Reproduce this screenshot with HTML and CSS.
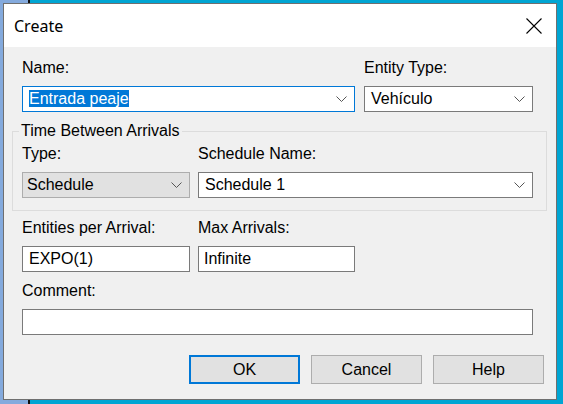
FILE: index.html
```html
<!DOCTYPE html>
<html lang="en">
<head>
<meta charset="utf-8">
<title>Create</title>
<link rel="stylesheet" href="styles.css">
</head>
<body>
<div class="window">
  <div class="titlebar">
    <span class="title">Create</span>
    <svg class="close" width="16" height="16" viewBox="0 0 16 16"><path d="M0.5 0.5 L15.5 15.5 M15.5 0.5 L0.5 15.5" stroke="#000" stroke-width="1.1" fill="none"/></svg>
  </div>
  <div class="content">
    <div class="row row-name">
      <div class="field">
        <div class="label">Name:</div>
        <div class="box combo focus w-name"><span class="val pad-7"><span class="sel">Entrada peaje</span></span><svg class="chev" width="11" height="6" viewBox="0 0 11 6"><polyline points="0.5,0.5 5.5,5.5 10.5,0.5" fill="none" stroke="#555" stroke-width="1"/></svg></div>
      </div>
      <div class="field">
        <div class="label">Entity Type:</div>
        <div class="box combo w-entity"><span class="val pad-6">Vehículo</span><svg class="chev" width="11" height="6" viewBox="0 0 11 6"><polyline points="0.5,0.5 5.5,5.5 10.5,0.5" fill="none" stroke="#555" stroke-width="1"/></svg></div>
      </div>
    </div>
    <fieldset class="group">
      <legend>Time Between Arrivals</legend>
      <div class="row">
        <div class="field">
          <div class="label">Type:</div>
          <div class="box combo disabled w-left"><span class="val pad-4">Schedule</span><svg class="chev" width="11" height="6" viewBox="0 0 11 6"><polyline points="0.5,0.5 5.5,5.5 10.5,0.5" fill="none" stroke="#555" stroke-width="1"/></svg></div>
        </div>
        <div class="field">
          <div class="label">Schedule Name:</div>
          <div class="box combo w-sched"><span class="val pad-6">Schedule 1</span><svg class="chev" width="11" height="6" viewBox="0 0 11 6"><polyline points="0.5,0.5 5.5,5.5 10.5,0.5" fill="none" stroke="#555" stroke-width="1"/></svg></div>
        </div>
      </div>
    </fieldset>
    <div class="row row-ent">
      <div class="field">
        <div class="label">Entities per Arrival:</div>
        <div class="box w-left"><span class="val pad-7">EXPO(1)</span></div>
      </div>
      <div class="field">
        <div class="label">Max Arrivals:</div>
        <div class="box w-max"><span class="val pad-5">Infinite</span></div>
      </div>
    </div>
    <div class="row row-comment">
      <div class="field">
        <div class="label">Comment:</div>
        <div class="box w-comment"></div>
      </div>
    </div>
    <div class="buttons">
      <div class="btn default">OK</div>
      <div class="btn">Cancel</div>
      <div class="btn">Help</div>
    </div>
  </div>
</div>
</body>
</html>
```
FILE: styles.css
```css
* { box-sizing: border-box; }
html, body { margin: 0; padding: 0; }
body {
  width: 563px;
  height: 404px;
  overflow: hidden;
  padding: 3px 6px 4px 3px;
  background: linear-gradient(90deg, #84aadd 0 28px, #101010 28px 30px, #00a5d3 30px);
  font-family: "Liberation Sans", Arial, sans-serif;
  font-size: 16px;
  color: #000;
}
.window {
  width: 554px;
  height: 397px;
  border: 1px solid #6f6f6f;
  background: #f0f0f0;
  display: flex;
  flex-direction: column;
}
.titlebar {
  height: 43px;
  background: #fff;
  display: flex;
  align-items: center;
  justify-content: space-between;
  padding: 0 14px 0 10px;
}
.title {
  font-family: "Noto Sans", "Open Sans", sans-serif;
  font-size: 16px;
  line-height: 20px;
  margin-top: 1px;
}
.close { display: block; margin-top: 1px; }
.content {
  flex: 1;
  padding: 12px 8px 0 8px;
  display: flex;
  flex-direction: column;
}
.row { display: flex; gap: 8px; }
.row-name, .row-ent, .row-comment { margin-left: 10px; }
.row-name { gap: 9px; }
.row-ent { margin-top: 8px; }
.row-comment { margin-top: 10px; }
.field { display: flex; flex-direction: column; gap: 9px; }
.label { line-height: 18px; height: 18px; white-space: nowrap; }
.box {
  height: 26px;
  border: 1px solid #7a7a7a;
  background: #fff;
  display: flex;
  align-items: center;
  justify-content: space-between;
  line-height: 18px;
  white-space: nowrap;
}
.combo { padding-right: 7px; }
.focus { border-color: #0078d7; }
.disabled { background: #e1e1e1; border-color: #adadad; }
.sel { background: #0078d7; color: #fff; }
.pad-4 { padding-left: 4px; }
.pad-5 { padding-left: 5px; }
.pad-6 { padding-left: 6px; }
.pad-7 { padding-left: 6px; }
.chev { display: block; flex: none; }
.w-name { width: 333px; }
.w-entity { width: 169px; }
.w-left { width: 168px; }
.w-sched { width: 335px; }
.w-max { width: 157px; }
.w-comment { width: 511px; }
.group {
  margin: 10px 0 0 0;
  width: 535px;
  border: 1px solid #dcdcdc;
  padding: 5px 9px 12px 9px;
}
.group legend {
  padding: 0 2px;
  margin-left: -3px;
  line-height: 18px;
}
.buttons {
  margin-top: 20px;
  display: flex;
  justify-content: flex-end;
  gap: 11px;
  padding-right: 4px;
}
.btn {
  width: 111px;
  height: 29px;
  border: 1px solid #adadad;
  background: #e1e1e1;
  display: flex;
  align-items: center;
  justify-content: center;
  line-height: 18px;
}
.btn.default { border: 2px solid #0078d7; }
```
